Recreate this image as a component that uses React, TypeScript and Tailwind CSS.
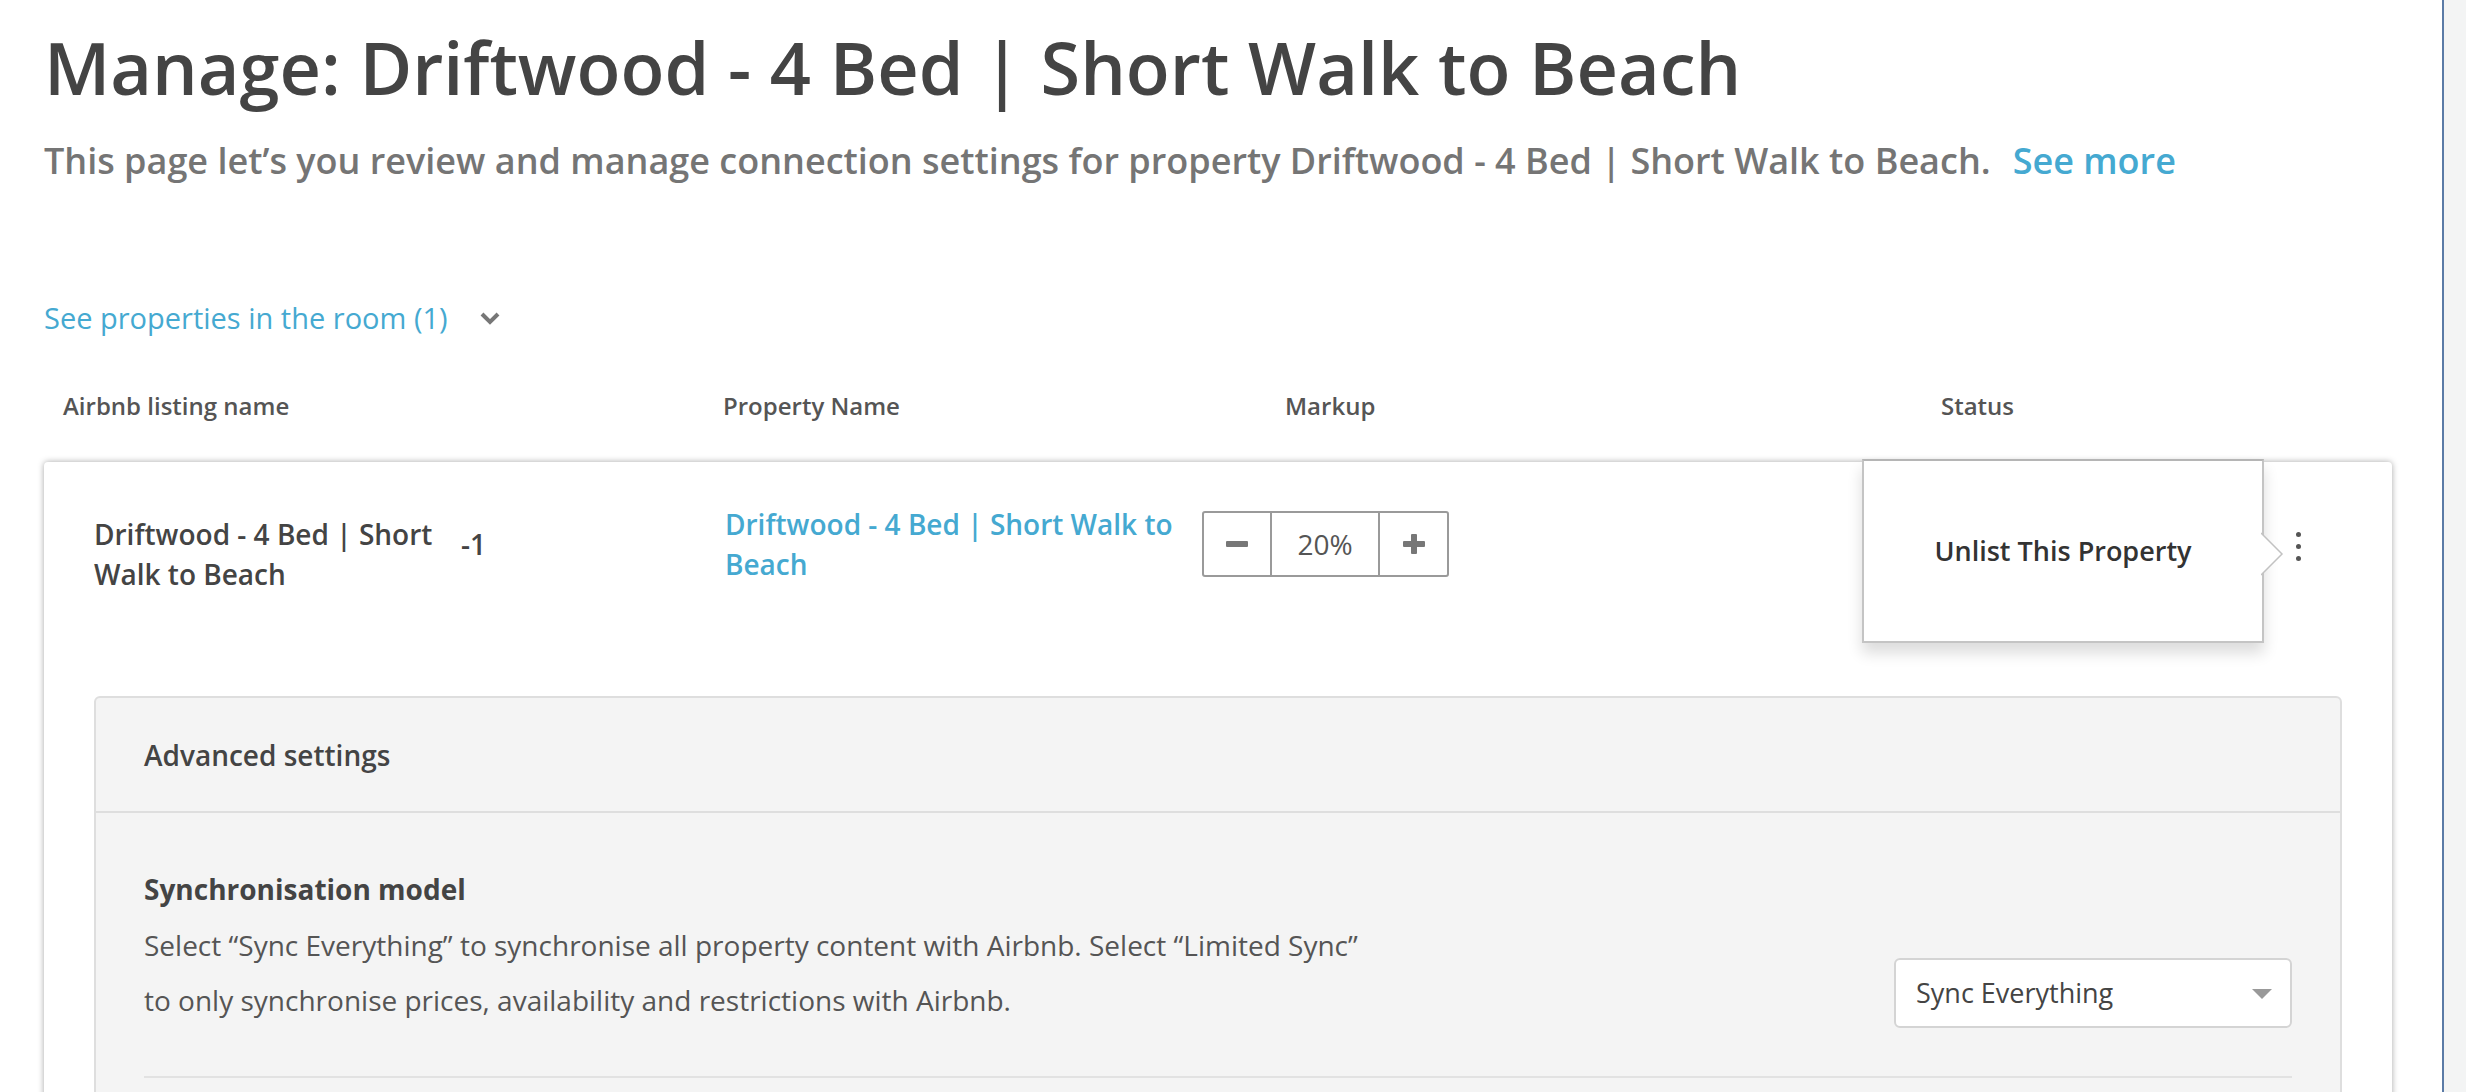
import { useState } from 'react';

const LISTING = 'Driftwood - 4 Bed | Short Walk to Beach';

function Stepper({ value, onChange }: { value: number; onChange: (v: number) => void }) {
  return (
    <div className="flex h-[66px] rounded-[3px] border-2 border-[#9a9a9a] bg-white">
      <button
        className="flex w-[68px] items-center justify-center border-r-2 border-[#9a9a9a]"
        onClick={() => onChange(value - 1)}
      >
        <span className="block h-[6px] w-[22px] rounded-[1px] bg-[#777]" />
      </button>
      <div className="flex w-[108px] items-center justify-center border-r-2 border-[#9a9a9a] text-[28px] text-[#555]">
        {value}%
      </div>
      <button className="relative flex w-[67px] items-center justify-center" onClick={() => onChange(value + 1)}>
        <span className="block h-[6px] w-[22px] rounded-[1px] bg-[#777]" />
        <span className="absolute left-1/2 top-1/2 h-[20px] w-[6px] -translate-x-1/2 -translate-y-1/2 rounded-[1px] bg-[#777]" />
      </button>
    </div>
  );
}

function UnlistPopover() {
  return (
    <div className="absolute left-[1818px] top-[-3px] z-10 flex h-[184px] w-[402px] items-center justify-center border-2 border-[#c4c4c4] border-t-[#b5b5b5] bg-white shadow-[0_10px_14px_rgba(0,0,0,0.14)]">
      <span className="text-[27px] font-semibold text-[#333]">Unlist This Property</span>
      <svg className="absolute left-[calc(100%-1px)] top-[71px]" width="24" height="44" viewBox="0 0 24 44">
        <polygon points="0,1 21,22 0,43" fill="white" />
        <polyline points="0,1 21,22 0,43" fill="none" stroke="#c2c2c2" strokeWidth="1.5" />
      </svg>
    </div>
  );
}

function Kebab() {
  return (
    <div className="absolute left-[2252px] top-[70px] flex flex-col gap-[7px]">
      <span className="block h-[5px] w-[5px] rounded-full bg-[#555]" />
      <span className="block h-[5px] w-[5px] rounded-full bg-[#555]" />
      <span className="block h-[5px] w-[5px] rounded-full bg-[#555]" />
    </div>
  );
}

export default function App() {
  const [markup, setMarkup] = useState(20);
  const [sync, setSync] = useState('Sync Everything');

  return (
    <div className="flex h-[1092px] w-full overflow-hidden bg-white font-['Open_Sans',sans-serif]">
      <div className="min-w-0 flex-1 pl-[44px] pr-[50px]">
        <h1 className="pt-[24px] text-[72px] font-semibold leading-[1.2] text-[#444]">Manage: {LISTING}</h1>
        <p className="mt-[24px] text-[36px] font-semibold leading-[54px] text-[#757575]">
          This page let’s you review and manage connection settings for property {LISTING}.
          <a className="ml-[22px] text-[#45a9d1]" href="#">
            See more
          </a>
        </p>

        <button className="mt-[109px] flex items-center gap-[32px] text-[29px] leading-[42px] text-[#45a9d1]">
          See properties in the room (1)
          <svg width="20" height="13" viewBox="0 0 20 13">
            <polyline points="2,2 10,10 18,2" fill="none" stroke="#777" strokeWidth="4" />
          </svg>
        </button>

        <div className="mt-[49px] grid grid-cols-[660px_562px_656px_1fr] pl-[19px] text-[24px] font-semibold leading-[36px] text-[#555]">
          <span>Airbnb listing name</span>
          <span>Property Name</span>
          <span>Markup</span>
          <span>Status</span>
        </div>

        <div className="relative mt-[38px] rounded-[4px] bg-white px-[50px] pt-[42px] shadow-[0_0_6px_rgba(0,0,0,0.35)]">
          <div className="flex h-[192px] items-start text-[28px] leading-[40px]">
            <div className="mt-[10px] w-[367px] font-semibold text-[#444]">
              Driftwood - 4 Bed | Short
              <br />
              Walk to Beach
            </div>
            <div className="mt-[20px] w-[264px] font-semibold text-[#444]">-1</div>
            <a className="w-[477px] font-semibold text-[#45a9d1]" href="#">
              Driftwood - 4 Bed | Short Walk to
              <br />
              Beach
            </a>
            <div className="mt-[7px]">
              <Stepper value={markup} onChange={setMarkup} />
            </div>
          </div>
          <UnlistPopover />
          <Kebab />

          <div className="rounded-[6px] border-2 border-[#dedede] bg-[#f4f4f4]">
            <div className="flex h-[115px] items-center border-b-2 border-[#dedede] px-[48px] text-[28px] font-semibold text-[#444]">
              Advanced settings
            </div>
            <div className="px-[48px] pt-[58px]">
              <div className="text-[28px] font-bold leading-[36px] text-[#444]">Synchronisation model</div>
              <div className="mt-[11px] flex items-end justify-between border-b-2 border-[#e2e2e2] pb-[48px]">
                <p className="text-[28px] leading-[55px] text-[#555]">
                  Select “Sync Everything” to synchronise all property content with Airbnb. Select “Limited Sync”
                  <br />
                  to only synchronise prices, availability and restrictions with Airbnb.
                </p>
                <div className="relative h-[70px] w-[398px] shrink-0">
                  <select
                    value={sync}
                    onChange={(e) => setSync(e.target.value)}
                    className="h-full w-full appearance-none rounded-[6px] border-2 border-[#d4d4d4] bg-white pl-[20px] text-[27px] text-[#444] outline-none"
                  >
                    <option>Sync Everything</option>
                    <option>Limited Sync</option>
                  </select>
                  <svg className="pointer-events-none absolute right-[20px] top-[31px]" width="20" height="10" viewBox="0 0 20 10">
                    <polygon points="0,0 20,0 10,10" fill="#999" />
                  </svg>
                </div>
              </div>
              <div className="h-[200px]" />
            </div>
          </div>
        </div>
      </div>
      <div className="w-[24px] shrink-0 border-l-2 border-[#5b7ba6] bg-[#f3f4f4]" />
    </div>
  );
}
